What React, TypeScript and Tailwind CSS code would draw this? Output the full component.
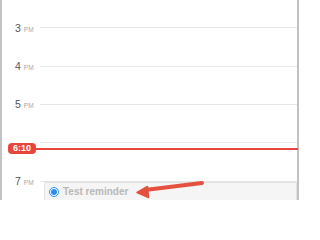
import React from "react";

const hours = ["3", "4", "5", "6", "7"];

export default function App() {
  return (
    <div
      className="relative w-[300px] h-[200px] overflow-hidden bg-white"
      style={{ fontFamily: '"Liberation Sans", Arial, sans-serif' }}
    >
      <div className="flex h-full w-[299px] flex-col border-l-2 border-r-2 border-[#c2c2c2] pt-[8.8px]">
        {hours.map((h) => (
          <div key={h} className="flex h-[38.33px] shrink-0 items-center">
            <div className="flex w-[38px] items-baseline pl-[13px]">
              {h !== "6" && (
                <>
                  <span className="text-[10.5px] leading-none text-[#555555]">{h}</span>
                  <span className="ml-[3px] text-[6.5px] leading-none text-[#a8a8a8]">PM</span>
                </>
              )}
            </div>
            <div className="h-px flex-1 bg-[#e6e6e6]" />
          </div>
        ))}
      </div>

      {/* now indicator */}
      <div className="absolute left-[8px] top-[143px] flex w-[290px] items-center">
        <div className="flex h-[11px] w-[28px] items-center justify-center rounded-[4px] bg-[#e8463b] text-[9px] font-bold leading-none text-white">
          6:10
        </div>
        <div className="h-[2px] flex-1 bg-[#e8463b]" />
      </div>

      {/* reminder event */}
      <div className="absolute left-[44px] top-[182px] flex h-[30px] w-[253px] items-start rounded-tl-[2px] border border-[#e2e2e2] bg-[#f5f5f5] pl-[4px] pt-[4px]">
        <div className="flex h-[10px] w-[10px] items-center justify-center rounded-full border-[1.5px] border-[#2b8ef0] bg-white">
          <div className="h-[6px] w-[6px] rounded-full bg-[#2b8ef0]" />
        </div>
        <span className="ml-[4px] text-[10px] font-bold leading-[10px] text-[#b8b8b8]">Test reminder</span>
      </div>

      {/* annotation arrow */}
      <svg className="absolute left-0 top-0" width="300" height="200" viewBox="0 0 300 200">
        <line x1="145" y1="190" x2="202" y2="183" stroke="#e5503f" strokeWidth="4" strokeLinecap="round" />
        <polygon points="137,192.5 147.5,186.5 148.5,197.5" fill="#e5503f" stroke="#e5503f" strokeWidth="1.5" strokeLinejoin="round" />
      </svg>
    </div>
  );
}
